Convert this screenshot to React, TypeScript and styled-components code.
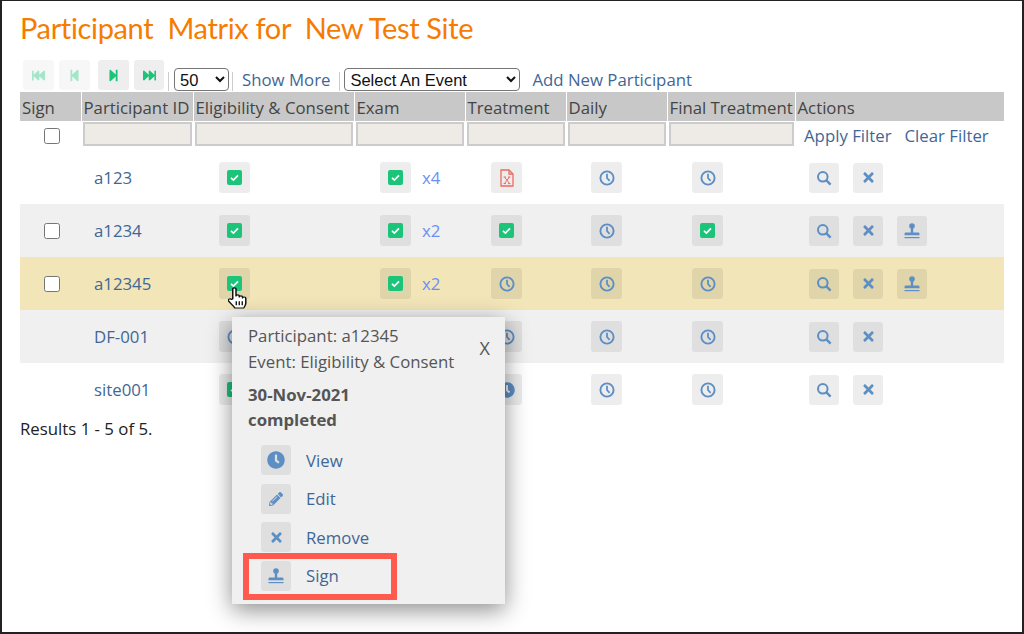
import * as React from 'react'
import styled, {createGlobalStyle} from 'styled-components'
import {
  FaClock,
  FaFastBackward,
  FaFastForward,
  FaPencilAlt,
  FaStepBackward,
  FaStepForward,
  FaTimes,
} from 'react-icons/fa'

const GlobalStyle = createGlobalStyle`
  html, body {
    margin: 0;
    background: #fff;
  }
  body {
    font-family: "Open Sans", "Liberation Sans", sans-serif;
    font-size: 16.8px;
    color: #444;
  }
`

const Frame = styled.div`
  position: relative;
  box-sizing: border-box;
  width: 1024px;
  height: 634px;
  padding: 10px 18px 0 18px;
  border: 2px solid #222;
  border-top-width: 1px;
  overflow: hidden;
  background: #fff;
`

const Title = styled.h1`
  margin: 0 0 15px;
  font-family: "Lato", sans-serif;
  font-size: 29px;
  line-height: 34px;
  font-weight: 400;
  letter-spacing: -0.35px;
  white-space: pre;
  color: #f57c00;
`

const Toolbar = styled.div`
  display: flex;
  align-items: flex-end;
  height: 32px;
  padding-left: 3px;
`

const PagerButton = styled.button<{$disabled?: boolean; $gap?: number; $width?: number}>`
  display: flex;
  align-items: center;
  justify-content: center;
  width: ${p => p.$width ?? 31}px;
  height: 30px;
  margin: 0 ${p => p.$gap ?? 5}px 2px 0;
  padding: 0;
  border: 0;
  border-radius: 3px;
  font-size: 13px;
  background: ${p => (p.$disabled ? '#f7f7f7' : '#eeeeee')};
  color: ${p => (p.$disabled ? '#a5e6cb' : '#1cc47a')};
`

const Separator = styled.span<{$left: number; $right: number}>`
  width: 1px;
  height: 19px;
  margin: 0 ${p => p.$right}px 1px ${p => p.$left}px;
  background: #ccc;
`

const Select = styled.select<{$width: number}>`
  width: ${p => p.$width}px;
  height: 23px;
  box-sizing: border-box;
  margin-bottom: 1px;
  padding: 0 0 0 1px;
  font-family: "Liberation Sans", sans-serif;
  font-size: 16.5px;
  color: #111;
  background: #fff;
  border: 1px solid #767676;
  border-radius: 4px;
`

const ToolLink = styled.a<{$left?: number}>`
  margin-left: ${p => p.$left ?? 0}px;
  line-height: 24px;
  color: #3f6796;
`

const Table = styled.table`
  width: 984px;
  table-layout: fixed;
  border-collapse: collapse;
`

const Th = styled.th<{$width: number}>`
  width: ${p => p.$width}px;
  height: 29px;
  box-sizing: border-box;
  padding: 1px 0 0 2px;
  border-left: 1px solid #fff;
  background: #c8c8c8;
  font-weight: 400;
  text-align: left;
  white-space: nowrap;
  color: #444;
  &:first-child {
    border-left: 0;
  }
`

const FilterCell = styled.td`
  height: 30px;
  padding: 0 1px 0 2px;
`

const FilterInput = styled.input`
  display: block;
  box-sizing: border-box;
  width: 100%;
  height: 24px;
  margin-bottom: 4px;
  background: #eeebe6;
  border: 2px solid #ccc;
`

const Check = styled.input.attrs({type: 'checkbox'})`
  display: block;
  width: 16px;
  height: 16px;
  margin: 0 auto 0 24px;
`

const SelectAll = styled(Check)`
  margin-left: 22px;
`

const FilterLinks = styled.div`
  display: flex;
  gap: 13px;
  padding: 0 0 2px 7px;
  white-space: nowrap;
  color: #3f6796;
`

const Row = styled.tr<{$bg?: string}>`
  height: 53px;
  background: ${p => p.$bg ?? '#fff'};
`

const Cell = styled.td<{$pad: number}>`
  padding: 0 0 0 ${p => p.$pad}px;
`

const IdCell = styled.td`
  padding: 0 0 0 13px;
  color: #3f6796;
`

const SignCell = styled.td`
  padding: 0;
`

const CellInner = styled.div`
  display: flex;
  align-items: center;
`

const Actions = styled.div`
  display: flex;
  gap: 14px;
  padding-left: 13px;
`

const IconButton = styled.span<{$color?: string; $size?: number; $box?: number}>`
  display: flex;
  flex: none;
  align-items: center;
  justify-content: center;
  width: ${p => p.$box ?? 30}px;
  height: ${p => p.$box ?? 30}px;
  border-radius: 3px;
  background: rgba(0, 0, 0, 0.07);
  color: ${p => p.$color ?? '#5d8fc4'};
  font-size: ${p => p.$size ?? 15}px;
`

const Count = styled.span`
  margin-left: 11px;
  color: #6d8ff5;
`

const Results = styled.div`
  margin-top: 2px;
  line-height: 22px;
  color: #222;
`

const Popup = styled.div`
  position: absolute;
  left: 230px;
  top: 316px;
  box-sizing: border-box;
  width: 273px;
  height: 287px;
  padding: 6px 0 0 16px;
  background: #f0f0f0;
  box-shadow: 0 6px 22px rgba(0, 0, 0, 0.45);
  color: #555;
`

const PopupLine = styled.div`
  line-height: 26px;
`

const PopupStrong = styled.div`
  margin-top: 7px;
  font-weight: 700;
  line-height: 25px;
`

const CloseMark = styled.span`
  position: absolute;
  top: 19px;
  right: 15px;
  font-size: 18px;
  line-height: 24px;
`

const Menu = styled.div`
  display: flex;
  flex-direction: column;
  gap: 8.5px;
  margin: 13px 0 0 13px;
`

const MenuItem = styled.div`
  display: flex;
  align-items: center;
  gap: 15px;
  color: #3f6796;
`

const Callout = styled.div`
  position: absolute;
  left: 241px;
  top: 552px;
  box-sizing: border-box;
  width: 154px;
  height: 47px;
  border: 6px solid #ff5a4d;
`

const HandCursor = styled.svg`
  position: absolute;
  left: 226px;
  top: 286px;
`

const StampIcon = () => (
  <svg width="18" height="18" viewBox="0 0 18 18" fill="currentColor">
    <circle cx="9" cy="4" r="2.8" />
    <rect x="7.8" y="5" width="2.4" height="6" />
    <path d="M1.5 13.2v-1.2c0-1 .7-1.4 1.6-1.4h11.8c.9 0 1.6.4 1.6 1.4v1.2z" />
    <rect x="1.5" y="15" width="15" height="1.2" />
  </svg>
)

const FileXIcon = () => (
  <svg width="14" height="18" viewBox="0 0 14 18" fill="none" stroke="currentColor" strokeWidth="1.3">
    <path d="M1 1h8l4 4v12H1z" />
    <path d="M9 1v4h4" />
    <path d="M4.5 8l5 6.5M9.5 8l-5 6.5M3.6 14.6h2.4M8 14.6h2.4M3.6 8h2.4M8 8h2.4" strokeWidth="1" />
  </svg>
)

const CheckIcon = () => (
  <svg width="15" height="15" viewBox="0 0 15 15">
    <rect width="15" height="15" rx="2" fill="currentColor" />
    <path d="M4 7.8l2.4 2.3L11 5.4" fill="none" stroke="#fff" strokeWidth="1.7" />
  </svg>
)

const ClockIcon = () => (
  <svg width="16" height="16" viewBox="0 0 16 16" fill="none" stroke="currentColor">
    <circle cx="8" cy="8" r="6.6" strokeWidth="1.9" />
    <path d="M8 3.8V8l2.6 2.8" strokeWidth="1.8" />
  </svg>
)

const SearchIcon = () => (
  <svg width="16" height="16" viewBox="0 0 16 16" fill="none" stroke="currentColor">
    <circle cx="6.8" cy="6.8" r="4.8" strokeWidth="2" />
    <path d="M10.4 10.4l4.2 4.2" strokeWidth="2.4" />
  </svg>
)

const check = <IconButton $box={31} $color="#1cc47a"><CheckIcon /></IconButton>
const clock = <IconButton $box={31}><ClockIcon /></IconButton>
const clockFilled = <IconButton $box={31} $size={16}><FaClock /></IconButton>
const fileX = <IconButton $box={31} $color="#ee6a5f"><FileXIcon /></IconButton>

interface Participant {
  id: string
  signable: boolean
  bg?: string
  cells: React.ReactNode[]
  examCount?: string
}

const participants: Participant[] = [
  {id: 'a123', signable: false, cells: [check, check, fileX, clock, clock], examCount: 'x4'},
  {id: 'a1234', signable: true, bg: '#f0f0f0', cells: [check, check, check, clock, check], examCount: 'x2'},
  {id: 'a12345', signable: true, bg: '#f2e5b8', cells: [check, check, clock, clock, clock], examCount: 'x2'},
  {id: 'DF-001', signable: false, bg: '#f0f0f0', cells: [clock, clock, clock, clock, clock]},
  {id: 'site001', signable: false, cells: [check, check, clockFilled, clock, clock]},
]

const columns: [string, number][] = [
  ['Sign', 61],
  ['Participant ID', 112],
  ['Eligibility & Consent', 161],
  ['Exam', 111],
  ['Treatment', 101],
  ['Daily', 101],
  ['Final Treatment', 128],
  ['Actions', 209],
]

export default function App() {
  return (
    <Frame>
      <GlobalStyle />
      <Title>{'Participant  Matrix for  New Test Site'}</Title>
      <Toolbar>
        <PagerButton $disabled><FaFastBackward /></PagerButton>
        <PagerButton $disabled $gap={8}><FaStepBackward /></PagerButton>
        <PagerButton><FaStepForward /></PagerButton>
        <PagerButton $gap={0} $width={30}><FaFastForward /></PagerButton>
        <Separator $left={4} $right={5} />
        <Select $width={55} defaultValue="50">
          <option>50</option>
        </Select>
        <Separator $left={3} $right={4} />
        <ToolLink $left={5}>Show More</ToolLink>
        <Separator $left={9} $right={4} />
        <Select $width={176} defaultValue="Select An Event">
          <option>Select An Event</option>
        </Select>
        <ToolLink $left={12}>Add New Participant</ToolLink>
      </Toolbar>
      <Table>
        <thead>
          <tr>
            {columns.map(([label, width]) => (
              <Th key={label} $width={width}>{label}</Th>
            ))}
          </tr>
        </thead>
        <tbody>
          <tr>
            <FilterCell><SelectAll /></FilterCell>
            {columns.slice(1, 7).map(([label]) => (
              <FilterCell key={label}><FilterInput /></FilterCell>
            ))}
            <FilterCell>
              <FilterLinks>
                <span>Apply Filter</span>
                <span>Clear Filter</span>
              </FilterLinks>
            </FilterCell>
          </tr>
          {participants.map(p => (
            <Row key={p.id} $bg={p.bg}>
              <SignCell>{p.signable && <Check />}</SignCell>
              <IdCell>{p.id}</IdCell>
              {p.cells.map((cell, i) => (
                <Cell key={i} $pad={i < 3 ? 26 : 25}>
                  <CellInner>
                    {cell}
                    {i === 1 && p.examCount && <Count>{p.examCount}</Count>}
                  </CellInner>
                </Cell>
              ))}
              <td>
                <Actions>
                  <IconButton><SearchIcon /></IconButton>
                  <IconButton><FaTimes /></IconButton>
                  {p.signable && <IconButton><StampIcon /></IconButton>}
                </Actions>
              </td>
            </Row>
          ))}
        </tbody>
      </Table>
      <Results>Results 1 - 5 of 5.</Results>

      <Popup>
        <CloseMark>X</CloseMark>
        <PopupLine>Participant: a12345</PopupLine>
        <PopupLine>Event: Eligibility &amp; Consent</PopupLine>
        <PopupStrong>30-Nov-2021<br />completed</PopupStrong>
        <Menu>
          <MenuItem><IconButton $size={18}><FaClock /></IconButton>View</MenuItem>
          <MenuItem><IconButton $size={14}><FaPencilAlt /></IconButton>Edit</MenuItem>
          <MenuItem><IconButton><FaTimes /></IconButton>Remove</MenuItem>
          <MenuItem><IconButton><StampIcon /></IconButton>Sign</MenuItem>
        </Menu>
      </Popup>
      <Callout />

      <HandCursor width="19" height="22" viewBox="2.5 1.5 14 21" preserveAspectRatio="none">
        <path
          d="M6 13V3.5C6 2 8.4 2 8.4 3.5V10c0-1.4 2.4-1.4 2.4 0v1c0-1.4 2.4-1.4 2.4 0v1c0-1.3 2.4-1.3 2.4.2V17c0 2-1 3-1.4 4.5H7.5C6.5 19 4.5 17.5 3 15c-1-1.6 1-3 2-1.6z"
          fill="#fff"
          stroke="#111"
          strokeWidth="1.1"
          strokeLinejoin="round"
        />
        <path d="M8.6 15v4M10.8 15v4M13 15v4" stroke="#111" strokeWidth="1" />
      </HandCursor>
    </Frame>
  )
}
